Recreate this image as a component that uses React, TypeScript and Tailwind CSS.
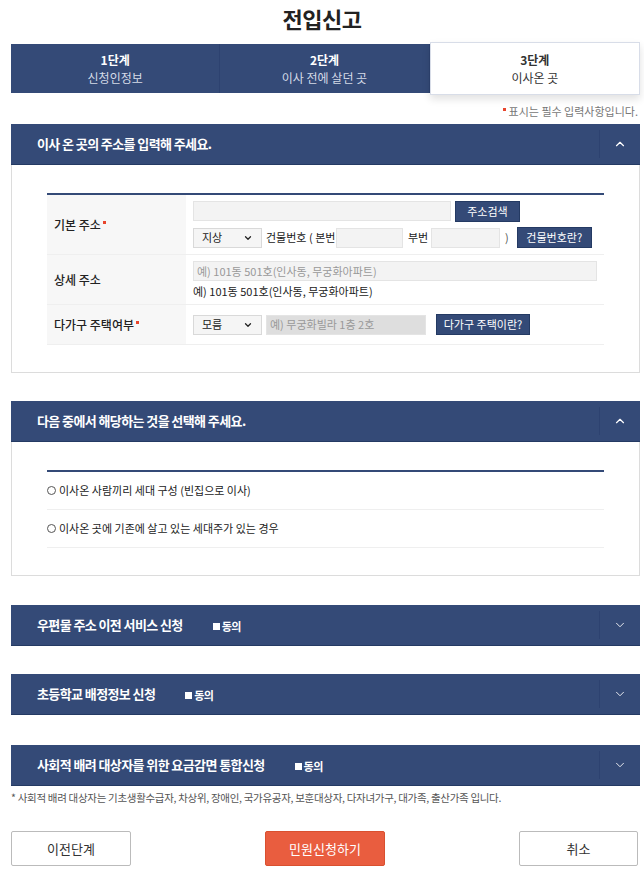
import { ChevronUp, ChevronDown } from 'lucide-react';

const font = { fontFamily: '"Noto Sans CJK KR", "Noto Sans", sans-serif' };

function Dot() {
  return <span className="inline-block w-[3px] h-[3px] bg-[#e8452c] align-top ml-[2px] -mt-[4px]" />;
}

function SectionHeader({ title, open, agree }: { title: string; open?: boolean; agree?: boolean }) {
  return (
    <div className="flex h-[41px] bg-[#344a77] border-b border-[#243a63] text-white">
      <div className="flex-1 flex items-center pl-[26px] text-[13px] font-bold tracking-[-0.6px]">
        {title}
        {agree && (
          <span className="flex items-center ml-[30px] mt-[3px] text-[11px] font-bold">
            <span className="inline-block w-[7px] h-[7px] bg-white mr-[2px]" />
            동의
          </span>
        )}
      </div>
      <div className="w-[41px] flex items-center justify-center border-l border-[#2d4270] my-[6px]">
        {open ? <ChevronUp size={14} strokeWidth={2} /> : <ChevronDown size={14} strokeWidth={1.5} />}
      </div>
    </div>
  );
}

function Select({ value }: { value: string }) {
  return (
    <div className="flex items-center justify-between w-[69px] h-[20px] border border-[#d9d9d9] bg-[#f5f5f5] px-[8px] text-[11px] text-[#222] shrink-0">
      <span>{value}</span>
      <ChevronDown size={10} strokeWidth={3} />
    </div>
  );
}

function NavyBtn({ children, w }: { children: string; w: string }) {
  return (
    <div className={`${w} h-[21px] shrink-0 flex items-center justify-center bg-[#344a77] border border-[#243a63] text-white text-[11px] whitespace-nowrap`}>
      {children}
    </div>
  );
}

function Step({ n, title, active }: { n: string; title: string; active?: boolean }) {
  if (active) {
    return (
      <div className="flex-1 h-[53px] bg-white border border-[#d8dde8] shadow-[0_4px_8px_rgba(0,0,0,0.12)] flex flex-col items-center justify-center text-[#333]">
        <div className="text-[12px] font-bold leading-[18px]">{n}</div>
        <div className="text-[12px] leading-[18px]">{title}</div>
      </div>
    );
  }
  return (
    <div className="flex-1 h-full bg-[#344a77] flex flex-col items-center justify-center text-white border-r border-[#2d4270]">
      <div className="text-[12px] font-bold leading-[18px]">{n}</div>
      <div className="text-[12px] text-[#d5dbe7] leading-[18px]">{title}</div>
    </div>
  );
}

export default function App() {
  return (
    <div className="w-[644px] h-[882px] bg-white text-[#222] overflow-hidden" style={font}>
      <h1 className="text-center text-[22px] font-bold pt-[2px] h-[44px] tracking-[-0.5px]">전입신고</h1>

      {/* Steps */}
      <div className="ml-[11px] mr-[4px] flex h-[49px] items-center">
        <Step n="1단계" title="신청인정보" />
        <Step n="2단계" title="이사 전에 살던 곳" />
        <Step n="3단계" title="이사온 곳" active />
      </div>

      <div className="mr-[6px] h-[31px] flex justify-end items-center text-[11px] text-[#777] pt-[5px]">
        <Dot />
        <span className="ml-[3px]">표시는 필수 입력사항입니다.</span>
      </div>

      {/* Section 1 */}
      <div className="ml-[11px] mr-[4px]">
        <SectionHeader title="이사 온 곳의 주소를 입력해 주세요." open />
        <div className="border border-t-0 border-[#dcdcdc] h-[208px] px-[35px] pt-[28px]">
          <div className="border-t-2 border-[#344a77] text-[12px]">
            <div className="flex border-b border-[#efefef] h-[60px]">
              <div className="w-[139px] bg-[#f7f7f7] flex items-center pl-[7px] font-medium">기본 주소<Dot /></div>
              <div className="flex-1 pl-[7px] pt-[6px] flex flex-col gap-[5px]">
                <div className="flex gap-[4px]">
                  <div className="w-[258px] h-[20px] bg-[#f3f3f3] border border-[#e4e4e4]" />
                  <NavyBtn w="w-[65px]">주소검색</NavyBtn>
                </div>
                <div className="flex items-center text-[11px] whitespace-nowrap">
                  <Select value="지상" />
                  <span className="ml-[4px] w-[70px] shrink-0">건물번호 ( 본번</span>
                  <div className="w-[67px] h-[20px] bg-[#f3f3f3] border border-[#e4e4e4] shrink-0" />
                  <span className="ml-[5px] w-[23px] shrink-0">부번</span>
                  <div className="w-[69px] h-[20px] bg-[#f3f3f3] border border-[#e4e4e4] shrink-0" />
                  <span className="ml-[5px] mr-[8px] text-[#555]">)</span>
                  <NavyBtn w="w-[75px]">건물번호란?</NavyBtn>
                </div>
              </div>
            </div>
            <div className="flex border-b border-[#efefef] h-[50px]">
              <div className="w-[139px] bg-[#f7f7f7] flex items-center pl-[7px] font-medium">상세 주소</div>
              <div className="flex-1 pl-[7px] pt-[6px]">
                <div className="w-[404px] h-[20px] bg-[#f3f3f3] border border-[#e4e4e4] flex items-center px-[3px] text-[11px] text-[#999]">
                  예) 101동 501호(인사동, 무궁화아파트)
                </div>
                <div className="text-[11px] mt-[2px]">예) 101동 501호(인사동, 무궁화아파트)</div>
              </div>
            </div>
            <div className="flex border-b border-[#efefef] h-[40px]">
              <div className="w-[139px] bg-[#f7f7f7] flex items-center pl-[7px] font-medium">다가구 주택여부<Dot /></div>
              <div className="flex-1 pl-[7px] flex items-center">
                <Select value="모름" />
                <div className="ml-[4px] w-[160px] h-[20px] bg-[#dedede] border border-[#e4e4e4] flex items-center px-[3px] text-[11px] text-[#999]">
                  예) 무궁화빌라 1층 2호
                </div>
                <div className="ml-[10px]">
                  <NavyBtn w="w-[94px]">다가구 주택이란?</NavyBtn>
                </div>
              </div>
            </div>
          </div>
        </div>
      </div>

      {/* Section 2 */}
      <div className="ml-[11px] mr-[4px] mt-[28px]">
        <SectionHeader title="다음 중에서 해당하는 것을 선택해 주세요." open />
        <div className="border border-t-0 border-[#dcdcdc] h-[134px] px-[35px] pt-[28px]">
          <div className="border-t-2 border-[#344a77] text-[11px]">
            <div className="flex items-center h-[38px] border-b border-[#efefef]">
              <span className="inline-block w-[9px] h-[9px] rounded-full border border-[#555] mr-[3px]" />
              이사온 사람끼리 세대 구성 (빈집으로 이사)
            </div>
            <div className="flex items-center h-[38px] border-b border-[#efefef]">
              <span className="inline-block w-[9px] h-[9px] rounded-full border border-[#555] mr-[3px]" />
              이사온 곳에 기존에 살고 있는 세대주가 있는 경우
            </div>
          </div>
        </div>
      </div>

      <div className="ml-[11px] mr-[4px] mt-[29px]">
        <SectionHeader title="우편물 주소 이전 서비스 신청" agree />
      </div>
      <div className="ml-[11px] mr-[4px] mt-[28px]">
        <SectionHeader title="초등학교 배정정보 신청" agree />
      </div>
      <div className="ml-[11px] mr-[4px] mt-[30px]">
        <SectionHeader title="사회적 배려 대상자를 위한 요금감면 통합신청" agree />
        <div className="text-[10.5px] text-[#555] mt-[4px] tracking-[-0.3px]">
          * 사회적 배려 대상자는 기초생활수급자, 차상위, 장애인, 국가유공자, 보훈대상자, 다자녀가구, 대가족, 출산가족 입니다.
        </div>
      </div>

      {/* Buttons */}
      <div className="ml-[11px] mr-[6px] mt-[25px] flex justify-between">
        <div className="w-[120px] h-[35px] border border-[#bbb] rounded-[2px] flex items-center justify-center text-[13px] text-[#333]">이전단계</div>
        <div className="w-[120px] h-[35px] bg-[#e95d3f] border border-[#d9502f] rounded-[2px] flex items-center justify-center text-[13px] text-white">민원신청하기</div>
        <div className="w-[119px] h-[35px] border border-[#bbb] rounded-[2px] flex items-center justify-center text-[13px] text-[#333]">취소</div>
      </div>
    </div>
  );
}
